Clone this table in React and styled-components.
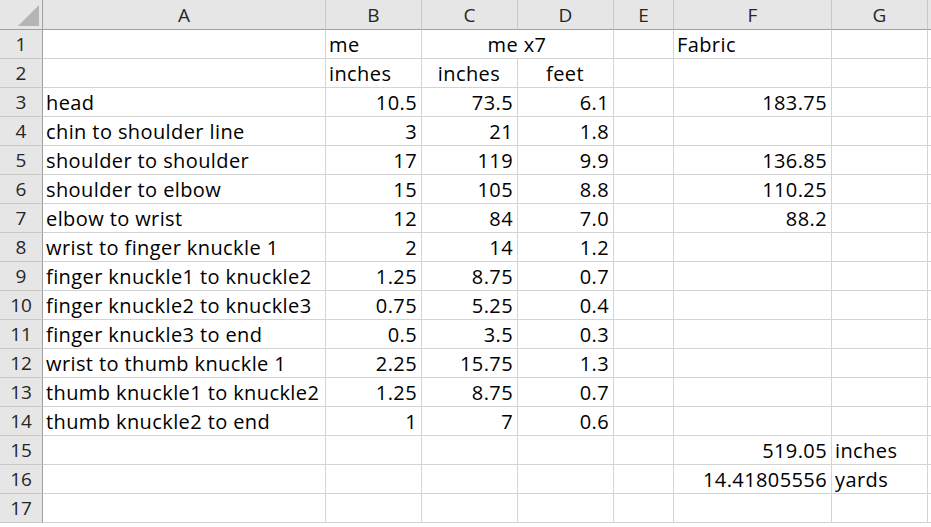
import React from "react";
import styled, { createGlobalStyle } from "styled-components";

const GlobalStyle = createGlobalStyle`
  html, body {
    margin: 0;
    padding: 0;
    background: #ffffff;
  }
  body {
    font-family: "Open Sans", "Noto Sans", sans-serif;
    overflow: hidden;
  }
`;

const columns = ["A", "B", "C", "D", "E", "F", "G", ""];

const rows = [
  { B: "me", CD: "me x7", F: "Fabric" },
  { B: "inches", C: "inches", D: "feet" },
  { A: "head", B: "10.5", C: "73.5", D: "6.1", F: "183.75" },
  { A: "chin to shoulder line", B: "3", C: "21", D: "1.8" },
  { A: "shoulder to shoulder", B: "17", C: "119", D: "9.9", F: "136.85" },
  { A: "shoulder to elbow", B: "15", C: "105", D: "8.8", F: "110.25" },
  { A: "elbow to wrist", B: "12", C: "84", D: "7.0", F: "88.2" },
  { A: "wrist to finger knuckle 1", B: "2", C: "14", D: "1.2" },
  { A: "finger knuckle1 to knuckle2", B: "1.25", C: "8.75", D: "0.7" },
  { A: "finger knuckle2 to knuckle3", B: "0.75", C: "5.25", D: "0.4" },
  { A: "finger knuckle3 to end", B: "0.5", C: "3.5", D: "0.3" },
  { A: "wrist to thumb knuckle 1", B: "2.25", C: "15.75", D: "1.3" },
  { A: "thumb knuckle1 to knuckle2", B: "1.25", C: "8.75", D: "0.7" },
  { A: "thumb knuckle2 to end", B: "1", C: "7", D: "0.6" },
  { F: "519.05", G: "inches" },
  { F: "14.41805556", G: "yards" },
  {},
];

const Sheet = styled.div`
  display: grid;
  grid-template-columns: 43px 283px 96px 96px 96px 60px 158px 96px 1fr;
  grid-auto-rows: 29px;
  grid-template-rows: 30px;
  width: 931px;
  height: 527px;
  overflow: hidden;
  font-size: 20px;
  letter-spacing: 0.4px;
  color: #000;
`;

const Corner = styled.div`
  background: #e6e6e6;
  border-right: 1px solid #9f9f9f;
  border-bottom: 1px solid #9f9f9f;
  box-sizing: border-box;

  svg {
    display: block;
  }
`;

const ColHead = styled.div`
  background: #e6e6e6;
  border-right: 1px solid #c8c8c8;
  border-bottom: 1px solid #9f9f9f;
  box-sizing: border-box;
  display: flex;
  align-items: center;
  justify-content: center;
  color: #262626;
  font-size: 19px;
  letter-spacing: 0;
`;

const RowHead = styled.div`
  background: #e6e6e6;
  border-right: 1px solid #9f9f9f;
  border-bottom: 1px solid #c8c8c8;
  box-sizing: border-box;
  display: flex;
  align-items: center;
  justify-content: center;
  color: #262626;
  font-size: 19px;
  letter-spacing: 0;
`;

const Cell = styled.div`
  border-right: 1px solid #d4d4d4;
  border-bottom: 1px solid #d4d4d4;
  box-sizing: border-box;
  display: flex;
  align-items: center;
  justify-content: ${(p) =>
    p.$align === "right" ? "flex-end" : p.$align === "center" ? "center" : "flex-start"};
  padding: 0 4px 0 3px;
  white-space: nowrap;
  overflow: visible;
  grid-column: ${(p) => (p.$span ? `span ${p.$span}` : "auto")};
`;

const numeric = (v) => /^[0-9.]+$/.test(v);

const SheetRow = ({ index, data }) => {
  const get = (k) => data[k] || "";
  const alignOf = (k) => {
    if (index === 2 && (k === "C" || k === "D")) return "center";
    return numeric(get(k)) ? "right" : "left";
  };
  const plain = (k) => (
    <Cell key={k} $align={alignOf(k)}>
      {get(k)}
    </Cell>
  );

  return (
    <>
      <RowHead>{index}</RowHead>
      {plain("A")}
      {plain("B")}
      {data.CD ? (
        <Cell $span={2} $align="center">
          {data.CD}
        </Cell>
      ) : (
        <>
          {plain("C")}
          {plain("D")}
        </>
      )}
      {plain("E")}
      {plain("F")}
      {plain("G")}
      {plain("H")}
    </>
  );
};

export default function App() {
  return (
    <>
      <GlobalStyle />
      <Sheet>
        <Corner>
          <svg width="42" height="29" viewBox="0 0 42 29">
            <polygon points="39,5 39,26 18,26" fill="#b5b5b5" />
          </svg>
        </Corner>
        {columns.map((c, i) => (
          <ColHead key={i}>{c}</ColHead>
        ))}
        {rows.map((r, i) => (
          <SheetRow key={i} index={i + 1} data={r} />
        ))}
      </Sheet>
    </>
  );
}
